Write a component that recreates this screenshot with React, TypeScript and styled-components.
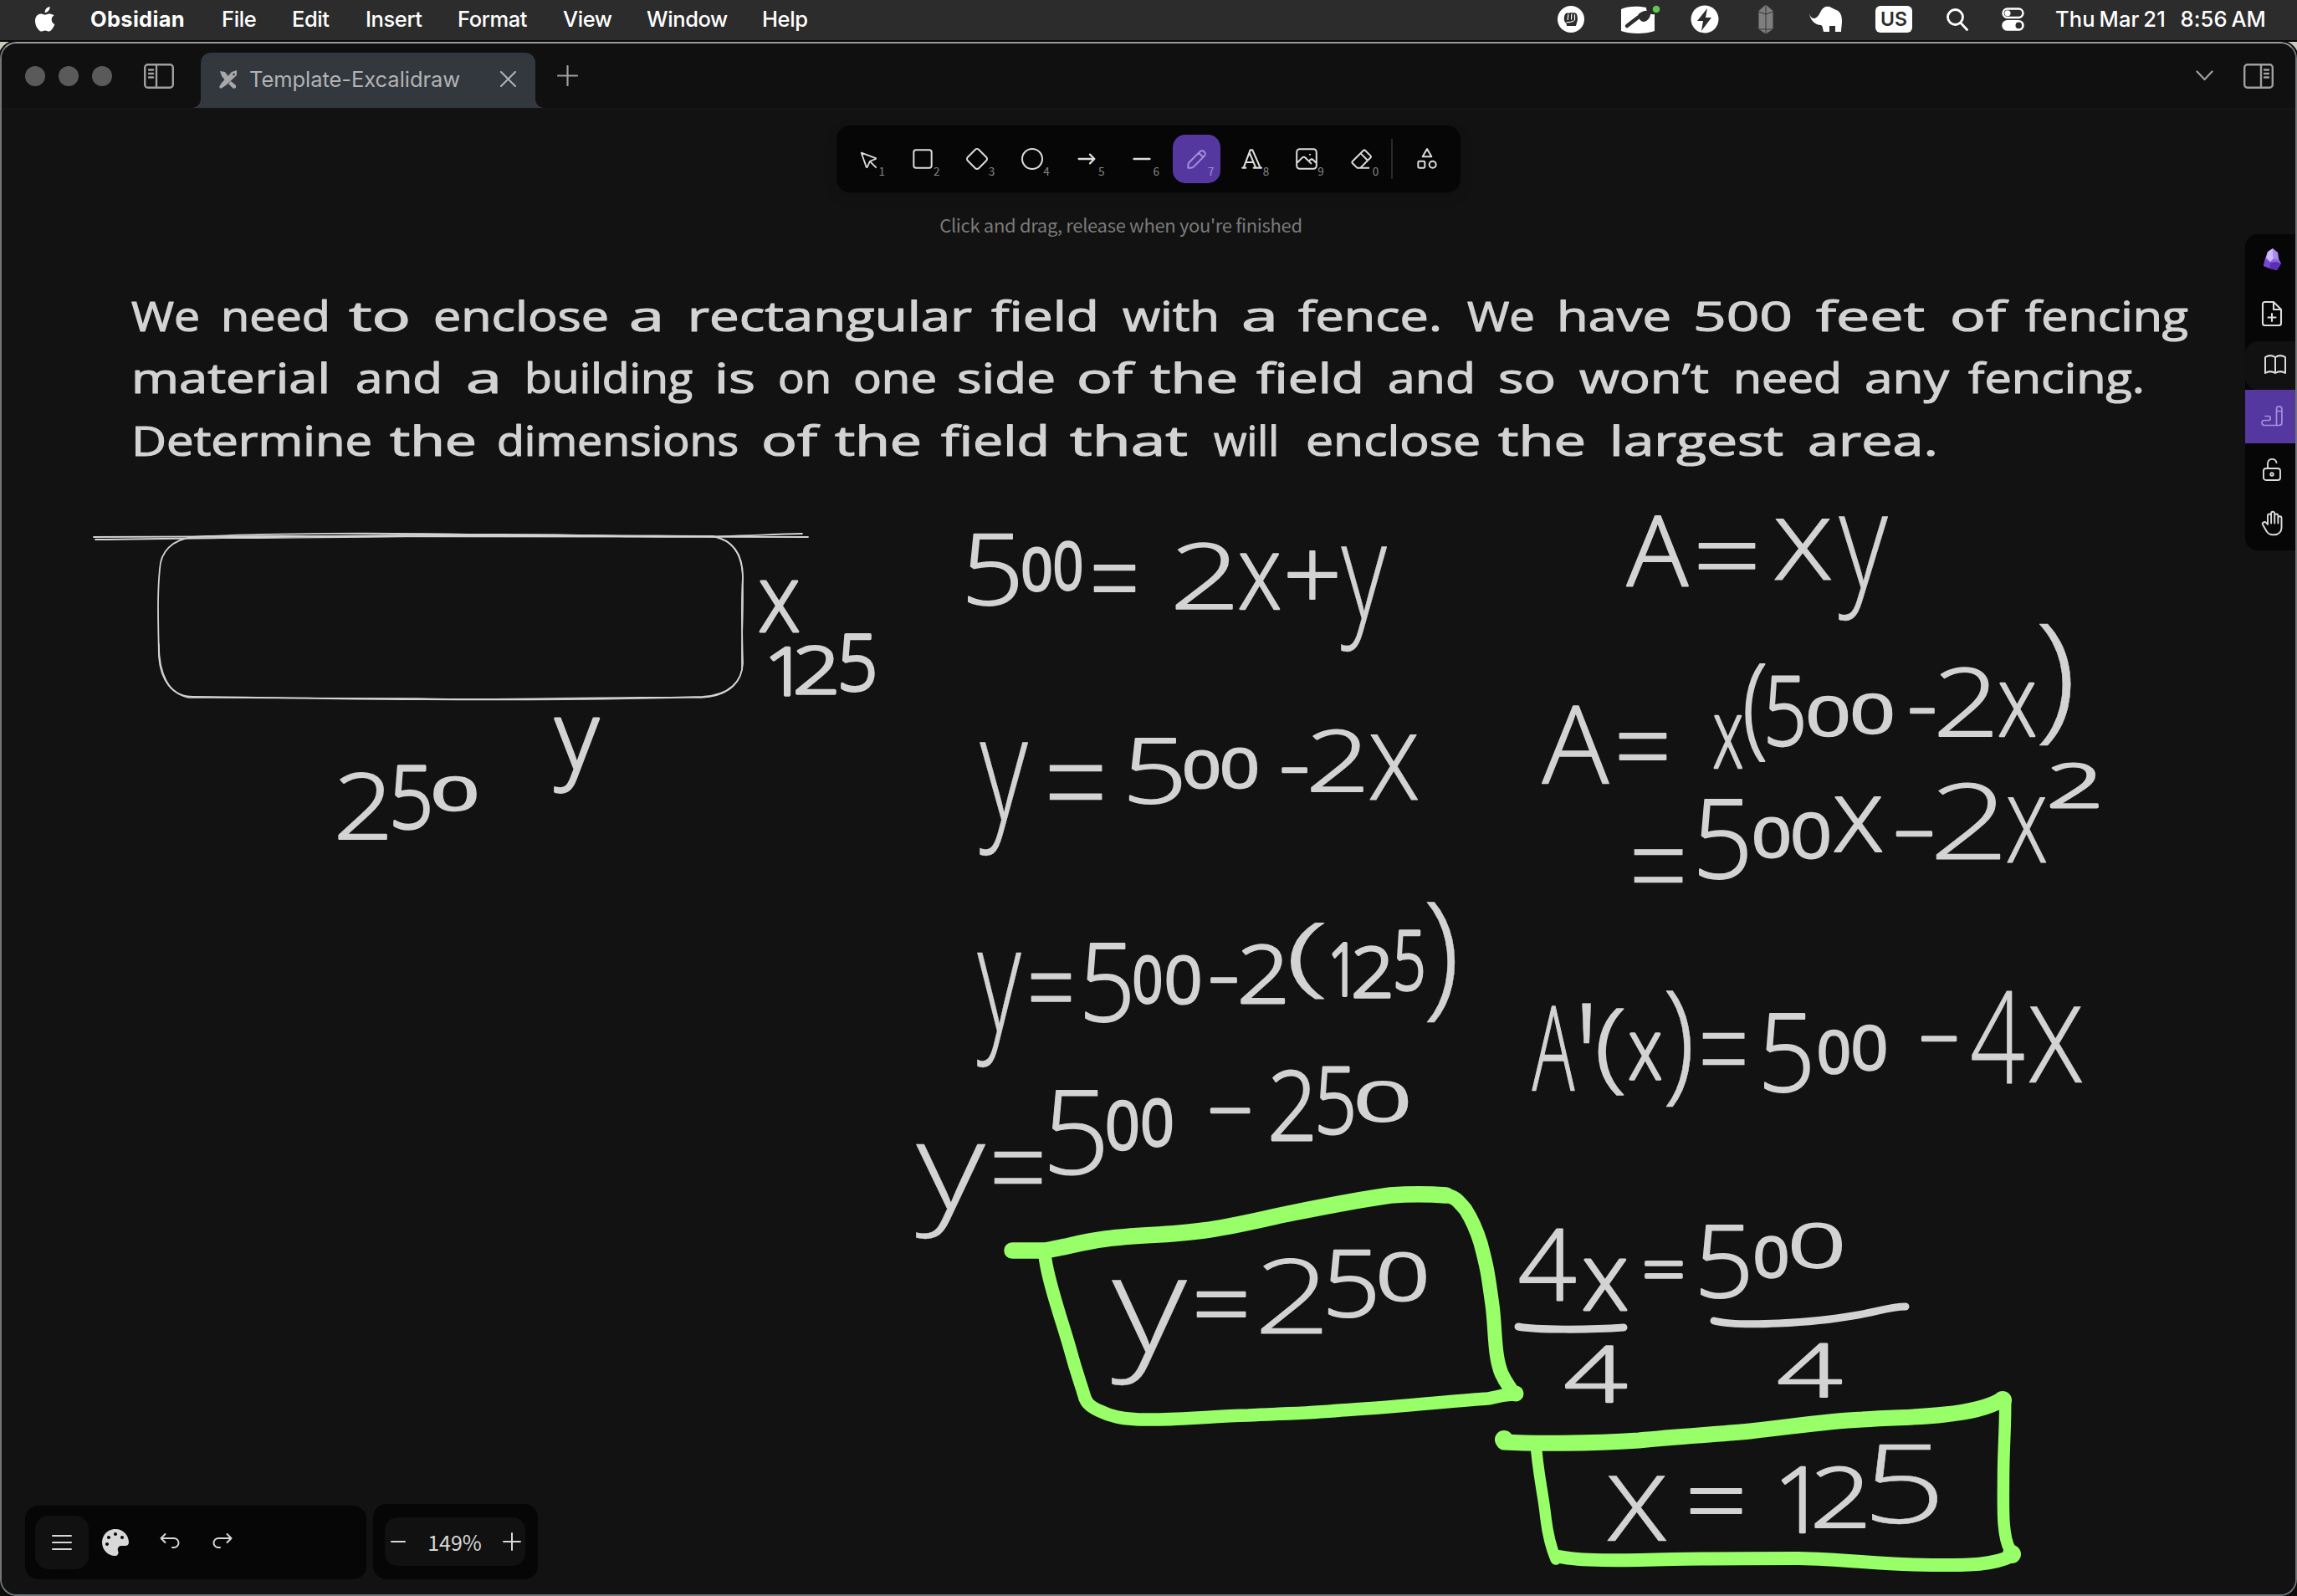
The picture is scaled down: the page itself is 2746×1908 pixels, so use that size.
import React from "react";
import styled, { createGlobalStyle } from "styled-components";
import { FaPalette } from "react-icons/fa";

const ui = `Inter, "Liberation Sans", sans-serif`;
const toolFont = `"Noto Sans CJK SC", "Noto Sans", sans-serif`;
const ink = "#d3d3d3";
const green = "#98ff68";

const Global = createGlobalStyle`
  * { box-sizing: border-box; }
  body { margin: 0; background: #000; }
`;

const Screen = styled.div`
  display: grid;
  grid-template-rows: 50px 1858px;
  width: 2746px;
  height: 1908px;
  overflow: hidden;
  background: linear-gradient(#cfc8bf 0, #cfc8bf 90px, #0c0c08 200px);
`;

/* ---------- system menu bar ---------- */

const MenuBar = styled.header`
  display: flex;
  align-items: center;
  height: 50px;
  padding: 0 37px 2px 41px;
  border-bottom: 2px solid #080808;
  background: #2c2c2c;
  color: #fff;
  font: 500 25.5px/48px ${ui};
`;

const AppleSlot = styled.div`
  display: flex;
  width: 67px;
`;

const MenuItem = styled.span<{ $w: number; $bold?: boolean; $track?: number }>`
  width: ${(p) => p.$w}px;
  font-weight: ${(p) => (p.$bold ? 700 : 500)};
  letter-spacing: ${(p) => p.$track ?? -0.4}px;
  white-space: nowrap;
`;

const Status = styled.div`
  display: flex;
  align-items: center;
  margin-left: auto;
`;

const StatusSlot = styled.div<{ $w: number }>`
  display: flex;
  align-items: center;
  width: ${(p) => p.$w}px;
`;

const InputBadge = styled.span`
  width: 44px;
  height: 32px;
  border-radius: 6px;
  background: #fff;
  color: #2c2c2c;
  text-align: center;
  font: 600 23px/32px ${ui};
`;

const Clock = styled.span`
  display: flex;
  justify-content: space-between;
  width: 252px;
  letter-spacing: 0.1px;
  word-spacing: -2px;
  white-space: pre;
`;

/* ---------- window ---------- */

const Window = styled.main`
  display: grid;
  grid-template-rows: 78px 1fr;
  overflow: hidden;
  border: 2px solid #72767a;
  border-top-color: #9b9b9b;
  border-radius: 20px;
  background: #121212;
  box-shadow: 0 0 0 2px #0a0a0a;
`;

const TabBar = styled.div`
  display: flex;
  align-items: center;
  padding: 0 26px 0 28px;
  border-bottom: 1px solid #161616;
  background: #101010;
`;

const Lights = styled.div`
  display: flex;
  gap: 16px;
  margin-right: 38px;
`;

const Light = styled.i`
  width: 24px;
  height: 24px;
  border-radius: 50%;
  background: #5a5a5a;
`;

const Tab = styled.div`
  position: relative;
  display: flex;
  align-items: center;
  align-self: flex-end;
  width: 400px;
  height: 66px;
  margin: 0 26px 0 32px;
  padding: 0 23px 3px 22px;
  border-radius: 12px 12px 0 0;
  background: #32383e;
  color: #b3b3b3;
  font: 400 25.5px/1 ${ui};

  &::before,
  &::after {
    content: "";
    position: absolute;
    bottom: 0;
    width: 10px;
    height: 10px;
  }
  &::before {
    left: -10px;
    background: radial-gradient(circle at 0 0, transparent 9.5px, #32383e 10px);
  }
  &::after {
    right: -10px;
    background: radial-gradient(circle at 100% 0, transparent 9.5px, #32383e 10px);
  }
`;

const TabTitle = styled.span`
  flex: 1;
  margin-left: 14px;
  letter-spacing: -0.05px;
  white-space: nowrap;
`;

const TabBarEnd = styled.div`
  display: flex;
  align-items: center;
  gap: 36px;
  margin-left: auto;
`;

const Glyph = styled.svg`
  display: block;
  flex: none;
  fill: none;
  stroke: currentColor;
  stroke-linecap: round;
  stroke-linejoin: round;
`;

const Chrome = styled.span`
  display: flex;
  color: #a0a0a0;
`;

const Body = styled.section`
  position: relative;
  background: #121212;
`;

/* ---------- canvas overlays ---------- */

const TopTools = styled.div`
  position: absolute;
  top: 20px;
  left: 998px;
  display: flex;
  flex-direction: column;
  align-items: center;
  width: 746px;
`;

const ToolStrip = styled.div`
  display: flex;
  align-items: center;
  width: 746px;
  height: 80px;
  padding: 0 8.5px;
  gap: 8.6px;
  border-radius: 16px;
  background: #060606;
  box-shadow: 0 6px 16px rgba(0, 0, 0, 0.12);
`;

const Tool = styled.button<{ $active?: boolean }>`
  position: relative;
  display: grid;
  place-items: center;
  width: 57px;
  height: 58px;
  flex: none;
  padding: 0;
  border: 0;
  border-radius: 15px;
  background: ${(p) => (p.$active ? "#55389f" : "transparent")};
  color: ${(p) => (p.$active ? "#a88fdd" : "#dcdcda")};
`;

const Key = styled.small<{ $active?: boolean }>`
  position: absolute;
  right: 7.5px;
  bottom: 7px;
  color: ${(p) => (p.$active ? "#a88fdd" : "#858585")};
  font: 400 13.5px/16px ${toolFont};
`;

const Divider = styled.i`
  width: 2px;
  height: 48px;
  flex: none;
  margin: 0 4px 0 -1.5px;
  background: #292929;
`;

const Hint = styled.p`
  margin: 21px 66px 0 0;
  color: #7a7a7a;
  font: 400 22px/34px ${toolFont};
  letter-spacing: -0.33px;
  white-space: nowrap;
`;

const SidePanel = styled.nav`
  position: absolute;
  top: 150px;
  right: 0;
  display: flex;
  flex-direction: column;
  width: 60px;
  height: 378px;
  overflow: hidden;
  border-radius: 15px 0 0 15px;
  background: #060606;
`;

const SideCell = styled.button<{ $h: number; $tone?: "active" | "raised" }>`
  display: grid;
  place-items: center;
  height: ${(p) => p.$h}px;
  padding: 0 0 2px ${(p) => (p.$tone === "raised" ? 12 : 4)}px;
  border: 0;
  border-radius: ${(p) => (p.$tone === "raised" ? "15px 0 0 15px" : "0")};
  background: ${(p) =>
    p.$tone === "active" ? "#55389f" : p.$tone === "raised" ? "#111111" : "transparent"};
  color: ${(p) => (p.$tone === "active" ? "#a88fdd" : "#dcdcda")};
`;

const Footer = styled.div`
  position: absolute;
  left: 28px;
  bottom: 18px;
  display: flex;
  align-items: flex-end;
  gap: 8px;
`;

const Actions = styled.div`
  display: flex;
  align-items: center;
  width: 408px;
  height: 88px;
  padding-left: 12px;
  border-radius: 16px;
  background: #060606;
  color: #d8d8d8;
`;

const MenuButton = styled.button`
  display: grid;
  place-items: center;
  width: 64px;
  height: 64px;
  margin-right: 16px;
  padding: 0;
  border: 0;
  border-radius: 16px;
  background: #111;
  color: inherit;
`;

const ActionIcon = styled.span<{ $gap: number }>`
  display: flex;
  margin-left: ${(p) => p.$gap}px;
  font-size: 32px;
`;

const Zoom = styled.div`
  display: flex;
  width: 197px;
  height: 90px;
  padding: 16px 15px 16px 14px;
  border-radius: 16px;
  background: #060606;
`;

const ZoomPill = styled.div`
  display: flex;
  flex: 1;
  align-items: center;
  justify-content: space-between;
  padding: 0 5px 0 6px;
  border-radius: 15px;
  background: #111;
  color: #d8d8d8;
  font: 400 25px/58px ${toolFont};
`;

const Board = styled.svg`
  display: block;
  width: 2742px;
  height: 1776px;
`;

const ProblemLine = styled.text`
  fill: ${ink};
  stroke: ${ink};
  stroke-width: 1.2px;
  stroke-linejoin: round;
  font-family: "Open Sans", "Noto Sans", sans-serif;
  font-size: 50px;
  font-weight: 400;
`;

const InkText = styled.text`
  fill: ${ink};
  stroke: ${ink};
  stroke-linejoin: round;
  font-family: "Open Sans", "Noto Sans", sans-serif;
  font-weight: 300;
`;

const Sketch = styled.path<{ $w: number; $c?: string }>`
  fill: none;
  stroke: ${(p) => p.$c ?? ink};
  stroke-width: ${(p) => p.$w}px;
  stroke-linecap: round;
  stroke-linejoin: round;
`;

/* ---------- board content ---------- */

type Word = [string, number, number];

const problem: { y: number; words: Word[] }[] = [
  {
    y: 396,
    words: [
      ["We", 159, 237], ["need", 266, 393], ["to", 419, 489], ["enclose", 520, 726],
      ["a", 754, 792], ["rectangular", 824, 1160], ["field", 1187, 1312], ["with", 1344, 1456],
      ["a", 1486, 1526], ["fence.", 1554, 1722], ["We", 1756, 1833], ["have", 1863, 1996],
      ["500", 2026, 2141], ["feet", 2173, 2299], ["of", 2333, 2396], ["fencing", 2423, 2614],
    ],
  },
  {
    y: 470,
    words: [
      ["material", 159, 393], ["and", 427, 527], ["a", 559, 598], ["building", 629, 826],
      ["is", 856, 901], ["on", 932, 992], ["one", 1022, 1118], ["side", 1146, 1260],
      ["of", 1289, 1352], ["the", 1377, 1478], ["field", 1504, 1629], ["and", 1661, 1762],
      ["so", 1793, 1858], ["won’t", 1890, 2041], ["need", 2074, 2200], ["any", 2231, 2328],
      ["fencing.", 2355, 2562],
    ],
  },
  {
    y: 545,
    words: [
      ["Determine", 159, 443], ["the", 468, 568], ["dimensions", 596, 881], ["of", 912, 975],
      ["the", 1000, 1100], ["field", 1127, 1253], ["that", 1281, 1418], ["will", 1453, 1527],
      ["enclose", 1563, 1768], ["the", 1793, 1894], ["largest", 1926, 2130], ["area.", 2163, 2315],
    ],
  },
];

/* Ink box of each character in em: left, right, advance, top, bottom. */
const metrics: Record<string, [number, number, number, number, number]> = {
  "0": [0.05, 0.52, 0.571, 0.724, -0.01],
  "1": [0.1, 0.345, 0.571, 0.714, 0],
  "2": [0.05, 0.52, 0.571, 0.724, 0],
  "4": [0.02, 0.56, 0.571, 0.714, 0],
  "5": [0.07, 0.51, 0.571, 0.714, -0.01],
  x: [0.02, 0.48, 0.5, 0.535, 0],
  y: [0.0, 0.49, 0.49, 0.535, -0.24],
  A: [0.0, 0.59, 0.59, 0.714, 0],
  "=": [0.05, 0.52, 0.571, 0.5, 0.22],
  "+": [0.05, 0.52, 0.571, 0.59, 0.12],
  "(": [0.05, 0.25, 0.28, 0.714, -0.158],
  ")": [0.03, 0.23, 0.28, 0.714, -0.158],
  "'": [0.06, 0.16, 0.22, 0.714, 0.464],
};

/* character, left, right, top, bottom */
type Mark = [string, number, number, number, number];

const equations: Mark[][] = [
  [["x", 907, 956, 693, 756]],
  [["1", 921, 946, 773, 833], ["2", 951, 1001, 771, 831], ["5", 1005, 1046, 757, 828]],
  [["y", 662, 717, 858, 949]],
  [["2", 404, 465, 923, 1004], ["5", 470, 514, 915, 993], ["0", 519, 569, 928, 970]],
  [
    ["5", 1157, 1217, 638, 725], ["0", 1222, 1257, 655, 708], ["0", 1260, 1294, 647, 707],
    ["=", 1307, 1358, 673, 710], ["2", 1405, 1476, 649, 729], ["x", 1481, 1531, 661, 729],
    ["+", 1539, 1599, 657, 716], ["y", 1603, 1658, 653, 779],
  ],
  [
    ["y", 1171, 1229, 886, 1023], ["=", 1254, 1318, 910, 958], ["5", 1350, 1412, 883, 962],
    ["0", 1416, 1457, 896, 944], ["0", 1461, 1503, 894, 944], ["−", 1533, 1562, 915, 926],
    ["2", 1567, 1632, 872, 947], ["x", 1637, 1696, 878, 957],
  ],
  [
    ["y", 1168, 1221, 1138, 1276], ["=", 1232, 1281, 1160, 1199], ["5", 1297, 1351, 1128, 1223],
    ["0", 1355, 1389, 1142, 1201], ["0", 1394, 1435, 1143, 1202], ["−", 1448, 1478, 1165, 1177],
    ["2", 1483, 1538, 1128, 1200], ["(", 1545, 1584, 1104, 1195], ["1", 1592, 1612, 1126, 1192],
    ["2", 1618, 1664, 1130, 1194], ["5", 1668, 1702, 1111, 1186], [")", 1705, 1738, 1078, 1222],
  ],
  [
    ["A", 1944, 2019, 616, 701], ["=", 2030, 2099, 646, 682], ["x", 2121, 2190, 620, 694],
    ["y", 2198, 2257, 617, 742],
  ],
  [
    ["A", 1843, 1924, 844, 938], ["=", 1935, 1993, 874, 911], ["x", 2048, 2084, 854, 919],
    ["(", 2087, 2111, 793, 911], ["5", 2113, 2156, 808, 894], ["0", 2162, 2209, 831, 881],
    ["0", 2215, 2262, 829, 878], ["−", 2284, 2312, 843, 855], ["2", 2317, 2384, 798, 881],
    ["x", 2389, 2434, 815, 881], [")", 2437, 2474, 746, 892],
  ],
  [
    ["=", 1953, 2012, 1010, 1056], ["5", 2031, 2089, 955, 1052], ["0", 2097, 2139, 977, 1027],
    ["0", 2143, 2187, 971, 1028], ["x", 2192, 2251, 952, 1019], ["−", 2268, 2309, 991, 1002],
    ["2", 2314, 2394, 936, 1027], ["x", 2399, 2447, 953, 1032], ["2", 2451, 2510, 911, 966],
  ],
  [
    ["A", 1831, 1883, 1203, 1304], ["'", 1888, 1905, 1200, 1246], ["(", 1912, 1942, 1205, 1309],
    ["x", 1947, 1987, 1234, 1292], [")", 1991, 2020, 1184, 1323], ["=", 2035, 2086, 1231, 1275],
    ["5", 2109, 2164, 1211, 1307], ["0", 2174, 2211, 1232, 1285], ["0", 2215, 2255, 1225, 1281],
    ["−", 2298, 2338, 1236, 1247], ["4", 2357, 2420, 1185, 1295], ["x", 2425, 2490, 1203, 1294],
  ],
  [
    ["y", 1095, 1178, 1368, 1481], ["=", 1188, 1246, 1373, 1417], ["5", 1255, 1319, 1303, 1406],
    ["0", 1323, 1361, 1315, 1376], ["0", 1365, 1402, 1313, 1372], ["−", 1448, 1493, 1321, 1334],
    ["2", 1519, 1571, 1279, 1364], ["5", 1576, 1618, 1275, 1358], ["0", 1623, 1683, 1292, 1342],
  ],
  [
    ["y", 1329, 1419, 1530, 1656], ["=", 1430, 1490, 1541, 1577], ["2", 1507, 1583, 1505, 1595],
    ["5", 1588, 1644, 1493, 1576], ["0", 1649, 1705, 1496, 1556],
  ],
  [
    ["4", 1816, 1884, 1470, 1556], ["x", 1892, 1946, 1504, 1567], ["=", 1966, 2012, 1504, 1529],
    ["5", 2033, 2090, 1464, 1553], ["0", 2098, 2137, 1477, 1529], ["0", 2142, 2202, 1461, 1517],
  ],
  [["4", 1871, 1945, 1609, 1677]],
  [["4", 2126, 2202, 1605, 1671]],
  [
    ["x", 1921, 1993, 1763, 1842], ["=", 2020, 2083, 1776, 1811], ["1", 2130, 2160, 1753, 1833],
    ["2", 2169, 2232, 1753, 1827], ["5", 2238, 2316, 1728, 1823],
  ],
];

/* Fits one character to the box its pen strokes cover. */
function fit([ch, l, r, t, b]: Mark) {
  if (ch === "−") {
    const size = 92;
    const adv = ((r - l) / 0.47) * 0.571;
    return { size, stroke: 3, x: l - adv * 0.088, y: (t + b) / 2 + size * 0.354, adv };
  }
  const [ml, mr, ma, mt, mb] = metrics[ch];
  const rough = (b - t) / (mt - mb);
  const stretch = (r - l) / (mr - ml) / rough;
  const pen = stretch > 1 ? 9 / Math.sqrt(stretch) : 9.3;
  const stroke = Math.max(0.4, pen - rough * 0.055);
  const size = (b - t - stroke) / (mt - mb);
  const adv = ((r - l - stroke) * ma) / (mr - ml);
  return { size, stroke, x: l + stroke / 2 - (adv * ml) / ma, y: t + stroke / 2 + size * mt, adv };
}

function Equation({ marks }: { marks: Mark[] }) {
  return (
    <InkText>
      {marks.map((m, i) => {
        const f = fit(m);
        return (
          <tspan key={i} x={f.x} y={f.y} fontSize={f.size} strokeWidth={f.stroke}
            textLength={f.adv} lengthAdjust="spacingAndGlyphs">
            {m[0]}
          </tspan>
        );
      })}
    </InkText>
  );
}

function Drawing() {
  return (
    <Board viewBox="2 130 2742 1776">
      {problem.map((line) => (
        <ProblemLine key={line.y}>
          {line.words.map(([w, a, b], i) => (
            <React.Fragment key={i}>
              <tspan x={a - 2} y={line.y} textLength={b - a + 4} lengthAdjust="spacingAndGlyphs">
                {w}
              </tspan>{" "}
            </React.Fragment>
          ))}
        </ProblemLine>
      ))}

      <Sketch $w={1.8} d="M112 642 C400 640 700 641 966 642" />
      <Sketch $w={1.8} d="M114 645 C350 643 560 636 700 640 S880 640 959 638" />
      <Sketch $w={1.8} d="M231 642 C320 637 460 637 560 639 C680 642 780 640 852 641 C878 646 888 665 888 690 C886 720 887 760 888 793 C887 815 872 831 840 833 C740 836 600 837 480 836 C400 836 300 833 231 833 C205 833 192 812 190 785 C189 740 188 710 191 680 C192 660 205 645 231 642 Z" />
      <Sketch $w={1.4} d="M231 643 C420 645 600 637 720 640 C780 641 830 640 856 642 C880 648 889 668 888 700 C889 740 886 760 887 800 C884 820 866 833 838 834 C700 832 620 838 500 835 C400 834 320 835 226 834 C202 830 190 806 190 770" />

      {equations.map((marks, i) => (
        <Equation key={i} marks={marks} />
      ))}

      <Sketch $w={9} d="M1815 1586 C1835 1590 1900 1590 1941 1587" />
      <Sketch $w={9} d="M2049 1579 C2080 1587 2170 1581 2215 1573 C2245 1568 2260 1562 2278 1562" />

      <Sketch $w={19.5} $c={green} d="M1210 1495 L1250 1495 C1275 1491 1290 1485 1322 1481 C1362 1476 1395 1477 1439 1471 C1477 1466 1510 1457 1545 1450 C1590 1441 1625 1434 1662 1429 C1690 1427 1715 1428 1729 1429" />
      <Sketch $w={17} $c={green} d="M1727 1429 C1740 1430 1744 1437 1752 1446 C1761 1460 1765 1470 1770 1486 C1779 1520 1779 1525 1784 1560 C1788 1590 1786 1620 1795 1642 C1800 1653 1804 1657 1808 1664" />
      <Sketch $w={15.5} $c={green} d="M1811 1667 C1795 1667 1788 1671 1778 1672 C1720 1676 1660 1683 1603 1686 C1560 1690 1525 1690 1492 1692 C1450 1693 1420 1697 1380 1697 C1340 1698 1325 1692 1313 1686 C1302 1681 1298 1676 1296 1668 C1290 1648 1288 1645 1279 1612 C1270 1580 1252 1530 1249 1500" />
      <circle cx={1812} cy={1666} r={9.5} fill={green} />

      <Sketch $w={19} $c={green} d="M1798 1724 C1830 1726 1900 1726 1959 1722 C2010 1717 2050 1715 2092 1711 C2140 1706 2180 1699 2226 1697 C2270 1694 2290 1695 2325 1691 C2355 1688 2376 1683 2392 1674" />
      <Sketch $w={14.5} $c={green} d="M2397 1672 C2398 1700 2395 1730 2395 1767 C2395 1800 2393 1835 2403 1853" />
      <Sketch $w={16} $c={green} d="M2405 1860 C2380 1872 2350 1871 2310 1871 C2250 1871 2210 1864 2150 1863 C2080 1863 2050 1863 2000 1864 C1930 1866 1890 1866 1864 1861" />
      <Sketch $w={13.5} $c={green} d="M1836 1723 C1838 1760 1845 1785 1848 1815 C1851 1840 1855 1852 1860 1864" />
      <circle cx={1798} cy={1721} r={11} fill={green} />
      <circle cx={2394} cy={1674} r={11} fill={green} />
      <circle cx={2405} cy={1858} r={11} fill={green} />
    </Board>
  );
}

/* ---------- icons ---------- */

function Icon({ s, vb, w, d, fill }: { s: number; vb: number; w: number; d: string; fill?: string }) {
  return (
    <Glyph width={s} height={s} viewBox={`0 0 ${vb} ${vb}`} strokeWidth={w}>
      <path d={d} fill={fill} />
    </Glyph>
  );
}

const tools: { key?: string; vb: number; w: number; d: string }[] = [
  { key: "1", vb: 22, w: 1.25, d: "M6 6l4.153 11.793a.365.365 0 0 0 .331.207.366.366 0 0 0 .332-.207L13 13l4.787-1.994a.355.355 0 0 0 .213-.323.355.355 0 0 0-.213-.323L6 6ZM13.5 13.5L18 18" },
  { key: "2", vb: 24, w: 1.5, d: "M6 4h12a2 2 0 0 1 2 2v12a2 2 0 0 1-2 2H6a2 2 0 0 1-2-2V6a2 2 0 0 1 2-2z" },
  { key: "3", vb: 24, w: 1.5, d: "M10.5 20.4l-6.9-6.9c-.781-.781-.781-2.219 0-3l6.9-6.9c.781-.781 2.219-.781 3 0l6.9 6.9c.781.781.781 2.219 0 3l-6.9 6.9c-.781.781-2.219.781-3 0z" },
  { key: "4", vb: 24, w: 1.5, d: "M3 12a9 9 0 1 0 18 0a9 9 0 1 0-18 0" },
  { key: "5", vb: 24, w: 1.7, d: "M5 12h14M15 16l4-4M15 8l4 4" },
  { key: "6", vb: 20, w: 1.6, d: "M4.167 10h11.666" },
  { key: "7", vb: 20, w: 1.25, d: "m7.643 15.69 7.774-7.773a2.357 2.357 0 1 0-3.334-3.334L4.31 12.357a3.333 3.333 0 0 0-.977 2.357v1.953h1.953c.884 0 1.732-.352 2.357-.977ZM11.25 5.417l3.333 3.333" },
  { key: "8", vb: 24, w: 1.6, d: "M4 20h3M14 20h7M6.9 15h6.9M10.2 6.3L16 20M5 20l6-16h2l7 16" },
  { key: "9", vb: 20, w: 1.25, d: "M12.5 6.667h.01M4.91 2.625h10.18a2.284 2.284 0 0 1 2.285 2.284v10.182a2.284 2.284 0 0 1-2.284 2.284H4.909a2.284 2.284 0 0 1-2.284-2.284V4.909a2.284 2.284 0 0 1 2.284-2.284ZM3.333 12.5l3.334-3.333c.773-.744 1.726-.744 2.5 0l4.166 4.166M11.667 11.667l.833-.834c.774-.744 1.726-.744 2.5 0l1.667 1.667" },
  { key: "0", vb: 24, w: 1.5, d: "M19 20H8.5l-4.21-4.3a1 1 0 0 1 0-1.41l10-10a1 1 0 0 1 1.41 0l5 5a1 1 0 0 1 0 1.41L11.5 20M18 13.3L11.7 7" },
  { vb: 24, w: 1.5, d: "M12 3l-4 7h8zM14 17a3 3 0 1 0 6 0a3 3 0 1 0-6 0M4 15a1 1 0 0 1 1-1h4a1 1 0 0 1 1 1v4a1 1 0 0 1-1 1H5a1 1 0 0 1-1-1z" },
];

function SidebarIcon({ flip }: { flip?: boolean }) {
  return (
    <Glyph width={36} height={30} viewBox="0 0 36 30" strokeWidth={2.4}
      transform={flip ? "scale(-1 1)" : undefined}>
      <rect x={1.2} y={1.2} width={33.6} height={27.6} rx={3.5} />
      <path d="M15 1.5v27M6 7.5h5M6 12h5M6 16.5h5" />
    </Glyph>
  );
}

function AppleLogo() {
  return (
    <svg width={27} height={32} viewBox="0 0 27 32" fill="#fff">
      <path d="M18.6 1c.2 2-.6 3.8-1.7 5.1-1.1 1.3-2.8 2.2-4.3 2.1-.2-1.9.7-3.9 1.7-5C15.4 1.9 17.2 1.1 18.600 1z" />
      <path d="M23.7 11.3c-2 1.200-3 2.9-3 5.100 0 2.5 1.4 4.6 3.7 5.6-.6 1.8-1.5 3.6-2.7 5.300-1.200 1.700-2.400 3.300-4.300 3.300-1.800 0-2.400-1.100-4.500-1.100s-2.800 1.100-4.500 1.100c-1.900.1-3.300-1.800-4.500-3.500-2.400-3.500-4.200-9.800-1.700-14.100 1.200-2.100 3.400-3.500 5.800-3.500 1.800 0 3.500 1.200 4.600 1.200s3.200-1.500 5.400-1.300c.9 0 3.900.4 5.700 1.900z" />
    </svg>
  );
}

export default function App() {
  return (
    <Screen>
      <Global />
      <MenuBar>
        <AppleSlot><AppleLogo /></AppleSlot>
        <MenuItem $w={157} $bold $track={0.3}>Obsidian</MenuItem>
        <MenuItem $w={84}>File</MenuItem>
        <MenuItem $w={88}>Edit</MenuItem>
        <MenuItem $w={110}>Insert</MenuItem>
        <MenuItem $w={126}>Format</MenuItem>
        <MenuItem $w={100}>View</MenuItem>
        <MenuItem $w={138}>Window</MenuItem>
        <MenuItem $w={60}>Help</MenuItem>
        <Status>
          <StatusSlot $w={76}>
            <svg width={32} height={32} viewBox="0 0 32 32">
              <circle cx={16} cy={16} r={16} fill="#fff" />
              <path d="M9 10c1-1.500 3-2 4.500-1 1.500-1.300 3-1.300 4.500-.3 1.500-.9 4-.4 5 1.300 1 4 1.500 7 0 10l-1 4H11l-.5-3C7.500 19 7 14 9 10z" fill="#2c2c2c" />
              <path d="M12.800 10.500l-.6 6M16.800 10l-.3 6M20.500 10.500v6.500M11 19.500c3 .5 6-.3 8-1.500" fill="none" stroke="#fff" strokeWidth={1.200} strokeLinecap="round" />
            </svg>
          </StatusSlot>
          <StatusSlot $w={83}>
            <svg width={48} height={40} viewBox="0 0 48 40">
              <path d="M0 8c8-4 20-4 30-2 0 5 4 9 10 8v20c-10 4-30 4-40 0z" fill="#fff" />
              <path d="M7 28l13-10" stroke="#2c2c2c" strokeWidth={4.500} strokeLinecap="round" />
              <path d="M20 15c3-4 8-6 15-5 1 6-2 12-8 13-3 0-6-3-7-8z" fill="#2c2c2c" />
              <circle cx={42} cy={8} r={4.300} fill="#63c554" />
            </svg>
          </StatusSlot>
          <StatusSlot $w={80}>
            <svg width={34} height={34} viewBox="0 0 34 34">
              <circle cx={17} cy={17} r={16.500} fill="#fff" />
              <path d="M20 4L8 19h7l-2 12 12-16h-7z" fill="#2c2c2c" />
            </svg>
          </StatusSlot>
          <StatusSlot $w={62}>
            <svg width={20} height={36} viewBox="0 0 20 36" fill="#7e7e7e" stroke="#2c2c2c" strokeWidth={0.900}>
              <path d="M10 0l9 8v22l-9 6-9-6V8z" />
              <path d="M1 9l9 3 9-3M10 12v18M1 30l9 0 9 0M10 0v12M10 30v6" fill="none" />
            </svg>
          </StatusSlot>
          <StatusSlot $w={79}>
            <svg width={40} height={32} viewBox="0 0 40 32" fill="#fff">
              <path d="M0 9c1 4 3 6 6 6 4-1 6-5 8-9 2-4 6-6 9-5 3 0 4 2 7 3 7 2 9 7 9 14 0 5-1 8-1 13h-7v-7h-7v7h-7c-1-4-1-7-3-8-7 0-13-6-14-14z" />
            </svg>
          </StatusSlot>
          <StatusSlot $w={85}><InputBadge>US</InputBadge></StatusSlot>
          <StatusSlot $w={66}>
            <Glyph width={26} height={27} viewBox="0 0 26 27" strokeWidth={2.800}>
              <circle cx={10.500} cy={10.500} r={9} />
              <path d="M17 17.500l7.500 8" />
            </Glyph>
          </StatusSlot>
          <StatusSlot $w={64}>
            <svg width={27} height={28} viewBox="0 0 27 28">
              <rect x={1.500} y={1.500} width={24} height={10.500} rx={5.250} fill="none" stroke="#fff" strokeWidth={2.400} />
              <circle cx={7} cy={6.750} r={3.600} fill="#fff" />
              <rect x={0.300} y={15} width={26.400} height={12.800} rx={6.400} fill="#fff" />
              <circle cx={20.300} cy={21.400} r={3.800} fill="#2c2c2c" />
            </svg>
          </StatusSlot>
          <Clock><span>Thu Mar 21</span><span>8:56 AM</span></Clock>
        </Status>
      </MenuBar>

      <Window>
        <TabBar>
          <Lights><Light /><Light /><Light /></Lights>
          <Chrome><SidebarIcon /></Chrome>
          <Tab>
            <svg width={22} height={22} viewBox="0 0 22 22" fill="#a8a8a8">
              <path d="M1 1l6 1 5 7-4 4-5-6z" />
              <path d="M14 13l6 5v3l-3 1-6-6z" />
              <path d="M15 2l6-2v6L8 18l-6 4-2-2 3-5z" />
              <circle cx={17.500} cy={5} r={1.300} fill="#32383e" />
            </svg>
            <TabTitle>Template-Excalidraw</TabTitle>
            <Icon s={19} vb={19} w={2} d="M1 1l17 17M18 1L1 18" />
          </Tab>
          <Chrome><Icon s={25} vb={25} w={2.200} d="M12.500 1v23M1 12.500h23" /></Chrome>
          <TabBarEnd>
            <Chrome><Icon s={21} vb={21} w={2.200} d="M1.500 5.500l9 9.500 9-9.500" /></Chrome>
            <Chrome><SidebarIcon flip /></Chrome>
          </TabBarEnd>
        </TabBar>

        <Body>
          <Drawing />

          <TopTools>
            <ToolStrip>
              {tools.map((t, i) => (
                <React.Fragment key={i}>
                  {!t.key && <Divider />}
                  <Tool $active={t.key === "7"}>
                    <Icon s={32} vb={t.vb} w={t.w} d={t.d} />
                    {t.key && <Key $active={t.key === "7"}>{t.key}</Key>}
                  </Tool>
                </React.Fragment>
              ))}
            </ToolStrip>
            <Hint>Click and drag, release when you're finished</Hint>
          </TopTools>

          <SidePanel>
            <SideCell $h={63}>
              <svg width={21} height={27} viewBox="0 0 21 27">
                <path d="M11 0l6 5 1 7 3 6-5 8-8-2-8-3 2-9 3-8z" fill="#8b62e8" />
                <path d="M11 0L5 4 3 11l5 5 4-4z" fill="#cdb9f7" />
                <path d="M11 0l1 12 6 2-1-9z" fill="#a98af0" />
                <path d="M2 12l6 5-1 7-7-4z" fill="#7547d6" />
                <path d="M8 17l7-1 6 2-5 8-9-2z" fill="#5b2fb5" />
              </svg>
            </SideCell>
            <SideCell $h={65}>
              <Icon s={32} vb={32} w={2.100} d="M18 2H7.500A2.500 2.500 0 0 0 5 4.500v23A2.500 2.500 0 0 0 7.500 30h17a2.500 2.500 0 0 0 2.500-2.500V11zM18 2v9h9M16 16v9M11.500 20.500h9" />
            </SideCell>
            <SideCell $h={58} $tone="raised">
              <Icon s={28} vb={28} w={2} d="M2 24V5c4-2.500 8-2.500 12 0 4-2.500 8-2.500 12 0v19c-4-2.500-8-2.500-12 0-4-2.500-8-2.500-12 0zM14 5v19" />
            </SideCell>
            <SideCell $h={64} $tone="active">
              <Icon s={28} vb={28} w={1.700} d="M19.500 25V6a3.200 3.200 0 0 1 6.400 0v16.500c0 1.500-1.200 3-3.200 3H5c-4 0-4-6 0-6h5c3 0 3-5 0-5H6M19.500 8.500h6.400" />
            </SideCell>
            <SideCell $h={64}>
              <Icon s={28} vb={28} w={1.900} d="M7 13h14a3 3 0 0 1 3 3v8a3 3 0 0 1-3 3H7a3 3 0 0 1-3-3v-8a3 3 0 0 1 3-3zM9 13V7.500c0-7 9-7.500 10.500-1.500M14 18.200a1.800 1.800 0 1 0 .01 0z" />
            </SideCell>
            <SideCell $h={64}>
              <Icon s={33} vb={24} w={1.400} d="M8 13V5.500a1.500 1.500 0 0 1 3 0V12M11 5.500v-2a1.500 1.500 0 1 1 3 0V12M14 5.500a1.500 1.500 0 0 1 3 0V12M17 7.500a1.500 1.500 0 0 1 3 0V16a6 6 0 0 1-6 6h-2 .208a6 6 0 0 1-5.012-2.700A69.740 69.740 0 0 1 7 19c-.312-.479-1.407-2.388-3.286-5.728a1.500 1.500 0 0 1 .536-2.022 1.867 1.867 0 0 1 2.280.280L8 13" />
            </SideCell>
          </SidePanel>

          <Footer>
            <Actions>
              <MenuButton>
                <Icon s={26} vb={26} w={2} d="M2 5h22M2 13h22M2 21h22" />
              </MenuButton>
              <ActionIcon $gap={0}><FaPalette /></ActionIcon>
              <ActionIcon $gap={36}>
                <Icon s={26} vb={26} w={2} d="M7.500 13L2.500 8l5-5M2.500 8H18a5.500 5.500 0 0 1 0 11h-2" />
              </ActionIcon>
              <ActionIcon $gap={37}>
                <Icon s={26} vb={26} w={2} d="M18.500 13l5-5-5-5M23.500 8H8a5.500 5.500 0 0 0 0 11h2" />
              </ActionIcon>
            </Actions>
            <Zoom>
              <ZoomPill>
                <Icon s={20} vb={20} w={2} d="M2 10h16" />
                149%
                <Icon s={22} vb={22} w={2} d="M11 1v20M1 11h20" />
              </ZoomPill>
            </Zoom>
          </Footer>
        </Body>
      </Window>
    </Screen>
  );
}
